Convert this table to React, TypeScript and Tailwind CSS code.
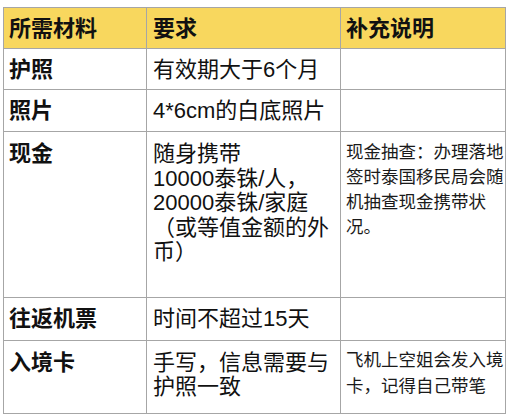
import React from "react";

const font = { fontFamily: '"Liberation Sans", "Noto Sans CJK SC", sans-serif' };

export default function App() {
  return (
    <div className="w-[510px] h-[418px] bg-white pt-[7px] pl-[3px] overflow-hidden" style={font}>
      <div className="grid grid-cols-[143px_194px_165px] grid-rows-[41px_41px_42px_166px_43px_73px] w-[503px] border-l border-t border-[#a6a6a6] text-[#111]">
        {/* header */}
        <div className="bg-[#f8d75e] border-r border-b border-[#a6a6a6] pl-[5px] pt-[9px] text-[22px] leading-[24px] font-bold">所需材料</div>
        <div className="bg-[#f8d75e] border-r border-b border-[#a6a6a6] pl-[6px] pt-[9px] text-[22px] leading-[24px] font-bold">要求</div>
        <div className="bg-[#f8d75e] border-r border-b border-[#a6a6a6] pl-[5px] pt-[9px] text-[22px] leading-[24px] font-bold">补充说明</div>

        <div className="border-r border-b border-[#a6a6a6] pl-[5px] pt-[9px] text-[22px] leading-[24px] font-bold">护照</div>
        <div className="border-r border-b border-[#a6a6a6] pl-[6px] pt-[9px] text-[22px] leading-[24px] whitespace-nowrap">有效期大于6个月</div>
        <div className="border-r border-b border-[#a6a6a6]"></div>

        <div className="border-r border-b border-[#a6a6a6] pl-[5px] pt-[9px] text-[22px] leading-[24px] font-bold">照片</div>
        <div className="border-r border-b border-[#a6a6a6] pl-[6px] pt-[9px] text-[22px] leading-[24px] whitespace-nowrap">4*6cm的白底照片</div>
        <div className="border-r border-b border-[#a6a6a6]"></div>

        <div className="border-r border-b border-[#a6a6a6] pl-[5px] pt-[10px] text-[22px] leading-[24.5px] font-bold">现金</div>
        <div className="border-r border-b border-[#a6a6a6] pl-[6px] pt-[10px] text-[22px] leading-[24.5px] whitespace-nowrap">
          随身携带
          <br />
          10000泰铢/人，
          <br />
          20000泰铢/家庭
          <br />
          （或等值金额的外
          <br />
          币）
        </div>
        <div className="border-r border-b border-[#a6a6a6] pl-[5px] pt-[8px] text-[17.5px] leading-[25px] text-[#1a1a1a] whitespace-nowrap">
          现金抽查：办理落地
          <br />
          签时泰国移民局会随
          <br />
          机抽查现金携带状
          <br />
          况。
        </div>

        <div className="border-r border-b border-[#a6a6a6] pl-[5px] pt-[9px] text-[22px] leading-[24px] font-bold">往返机票</div>
        <div className="border-r border-b border-[#a6a6a6] pl-[6px] pt-[9px] text-[22px] leading-[24px] whitespace-nowrap">时间不超过15天</div>
        <div className="border-r border-b border-[#a6a6a6]"></div>

        <div className="border-r border-b border-[#a6a6a6] pl-[5px] pt-[10px] text-[22px] leading-[24px] font-bold">入境卡</div>
        <div className="border-r border-b border-[#a6a6a6] pl-[6px] pt-[10px] text-[22px] leading-[24px] whitespace-nowrap">
          手写，信息需要与
          <br />
          护照一致
        </div>
        <div className="border-r border-b border-[#a6a6a6] pl-[5px] pt-[6px] text-[17.5px] leading-[26px] text-[#1a1a1a] whitespace-nowrap">
          飞机上空姐会发入境
          <br />
          卡，记得自己带笔
        </div>
      </div>
    </div>
  );
}
